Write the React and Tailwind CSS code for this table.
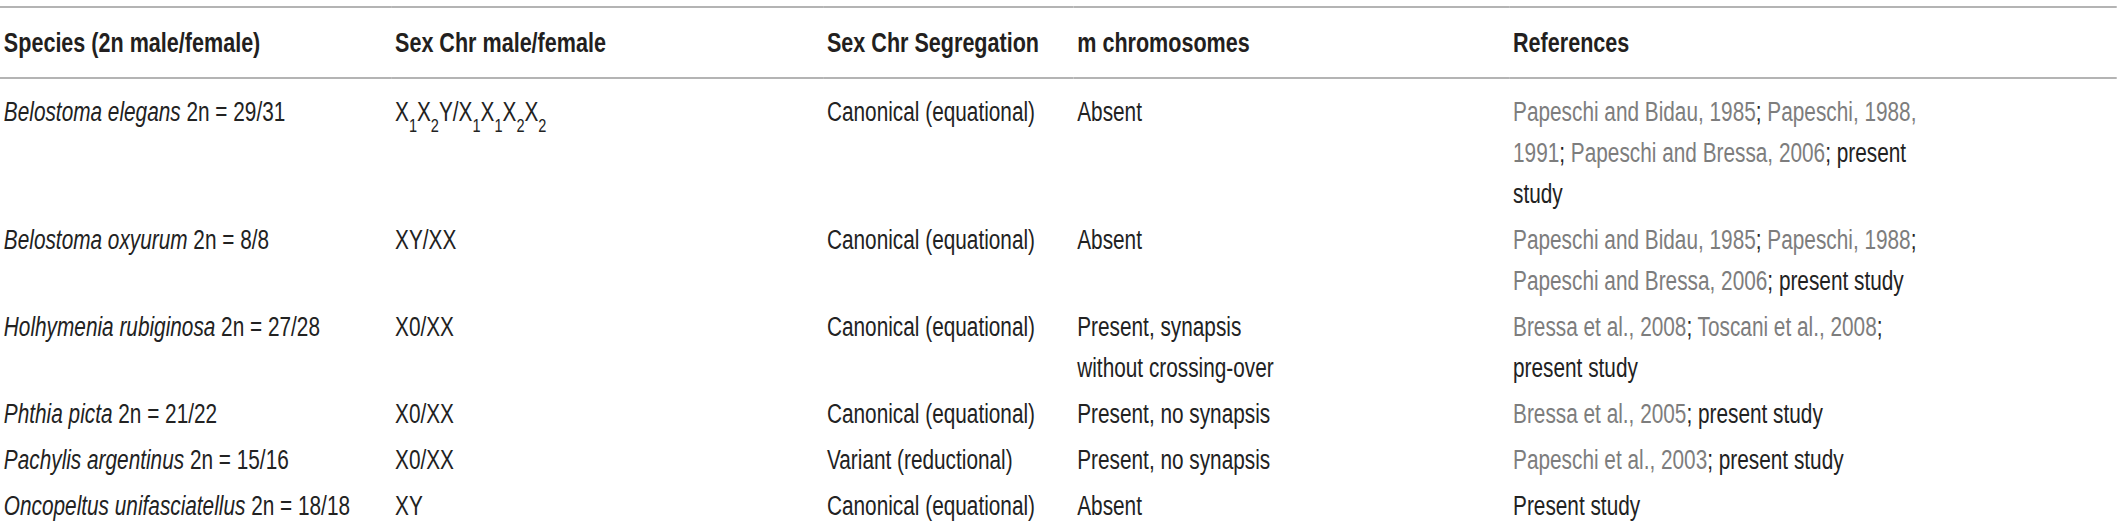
// ── Table data ────────────────────────────────────────────────────────────────
const X = ({ n }) => (
    <>
        X<sub className="text-[0.7em] leading-none align-[-0.32em]">{n}</sub>
    </>
);

const ROWS = [
    {
        genus: 'Belostoma elegans',
        count: '2n = 29/31',
        sex: (
            <>
                <X n="1" />
                <X n="2" />
                Y/
                <X n="1" />
                <X n="1" />
                <X n="2" />
                <X n="2" />
            </>
        ),
        seg: 'Canonical (equational)',
        m: 'Absent',
        refs: [
            { cite: 'Papeschi and Bidau, 1985' },
            { text: '; ' },
            { cite: 'Papeschi, 1988, 1991' },
            { text: '; ' },
            { cite: 'Papeschi and Bressa, 2006' },
            { text: '; present study' },
        ],
    },
    {
        genus: 'Belostoma oxyurum',
        count: '2n = 8/8',
        sex: 'XY/XX',
        seg: 'Canonical (equational)',
        m: 'Absent',
        refs: [
            { cite: 'Papeschi and Bidau, 1985' },
            { text: '; ' },
            { cite: 'Papeschi, 1988' },
            { text: '; ' },
            { cite: 'Papeschi and Bressa, 2006' },
            { text: '; present study' },
        ],
    },
    {
        genus: 'Holhymenia rubiginosa',
        count: '2n = 27/28',
        sex: 'X0/XX',
        seg: 'Canonical (equational)',
        m: 'Present, synapsis without crossing-over',
        refs: [
            { cite: 'Bressa et al., 2008' },
            { text: '; ' },
            { cite: 'Toscani et al., 2008' },
            { text: '; present study' },
        ],
    },
    {
        genus: 'Phthia picta',
        count: '2n = 21/22',
        sex: 'X0/XX',
        seg: 'Canonical (equational)',
        m: 'Present, no synapsis',
        refs: [{ cite: 'Bressa et al., 2005' }, { text: '; present study' }],
    },
    {
        genus: 'Pachylis argentinus',
        count: '2n = 15/16',
        sex: 'X0/XX',
        seg: 'Variant (reductional)',
        m: 'Present, no synapsis',
        refs: [{ cite: 'Papeschi et al., 2003' }, { text: '; present study' }],
    },
    {
        genus: 'Oncopeltus unifasciatellus',
        count: '2n = 18/18',
        sex: 'XY',
        seg: 'Canonical (equational)',
        m: 'Absent',
        refs: [{ text: 'Present study' }],
    },
];

const HEADERS = [
    'Species (2n male/female)',
    'Sex Chr male/female',
    'Sex Chr Segregation',
    'm chromosomes',
    'References',
];

// ── Table ─────────────────────────────────────────────────────────────────────
// The typeface is a narrow grotesque; Liberation Sans squeezed horizontally
// gives the same glyph proportions.
export default function App() {
    return (
        <div className="w-[2117px] overflow-hidden bg-white">
            <div
                className="w-[2749px] origin-top-left scale-x-[0.77] pt-[6px] text-[27px] leading-[41px] text-[#222]"
                style={{ fontFamily: '"Liberation Sans", Arial, sans-serif' }}
            >
                <table className="w-full table-fixed border-collapse">
                    <colgroup>
                        <col className="w-[508px]" />
                        <col className="w-[561px]" />
                        <col className="w-[325px]" />
                        <col className="w-[566px]" />
                        <col />
                    </colgroup>
                    <thead>
                        <tr className="border-y-2 border-[#b4b4b4]">
                            {HEADERS.map((h) => (
                                <th key={h} className="pl-[5px] py-[14px] text-left text-[28px] font-bold text-[#231f20]">
                                    {h}
                                </th>
                            ))}
                        </tr>
                    </thead>
                    <tbody>
                        {ROWS.map((r, i) => {
                            const pad = i === 0 ? 'pt-[13px] pb-[2px]' : 'pt-[3px] pb-[2px]';
                            return (
                                <tr key={r.genus} className="align-top">
                                    <td className={`pl-[5px] ${pad}`}>
                                        <i>{r.genus}</i> {r.count}
                                    </td>
                                    <td className={`pl-[5px] ${pad}`}>{r.sex}</td>
                                    <td className={`pl-[5px] ${pad}`}>{r.seg}</td>
                                    <td className={`pl-[5px] pr-[276px] ${pad}`}>{r.m}</td>
                                    <td className={`pl-[5px] pr-[239px] ${pad}`}>
                                        {r.refs.map((p, k) =>
                                            p.cite ? (
                                                <span key={k} className="text-[#7d7d7d]">
                                                    {p.cite}
                                                </span>
                                            ) : (
                                                <span key={k}>{p.text}</span>
                                            )
                                        )}
                                    </td>
                                </tr>
                            );
                        })}
                    </tbody>
                </table>
            </div>
        </div>
    );
}
